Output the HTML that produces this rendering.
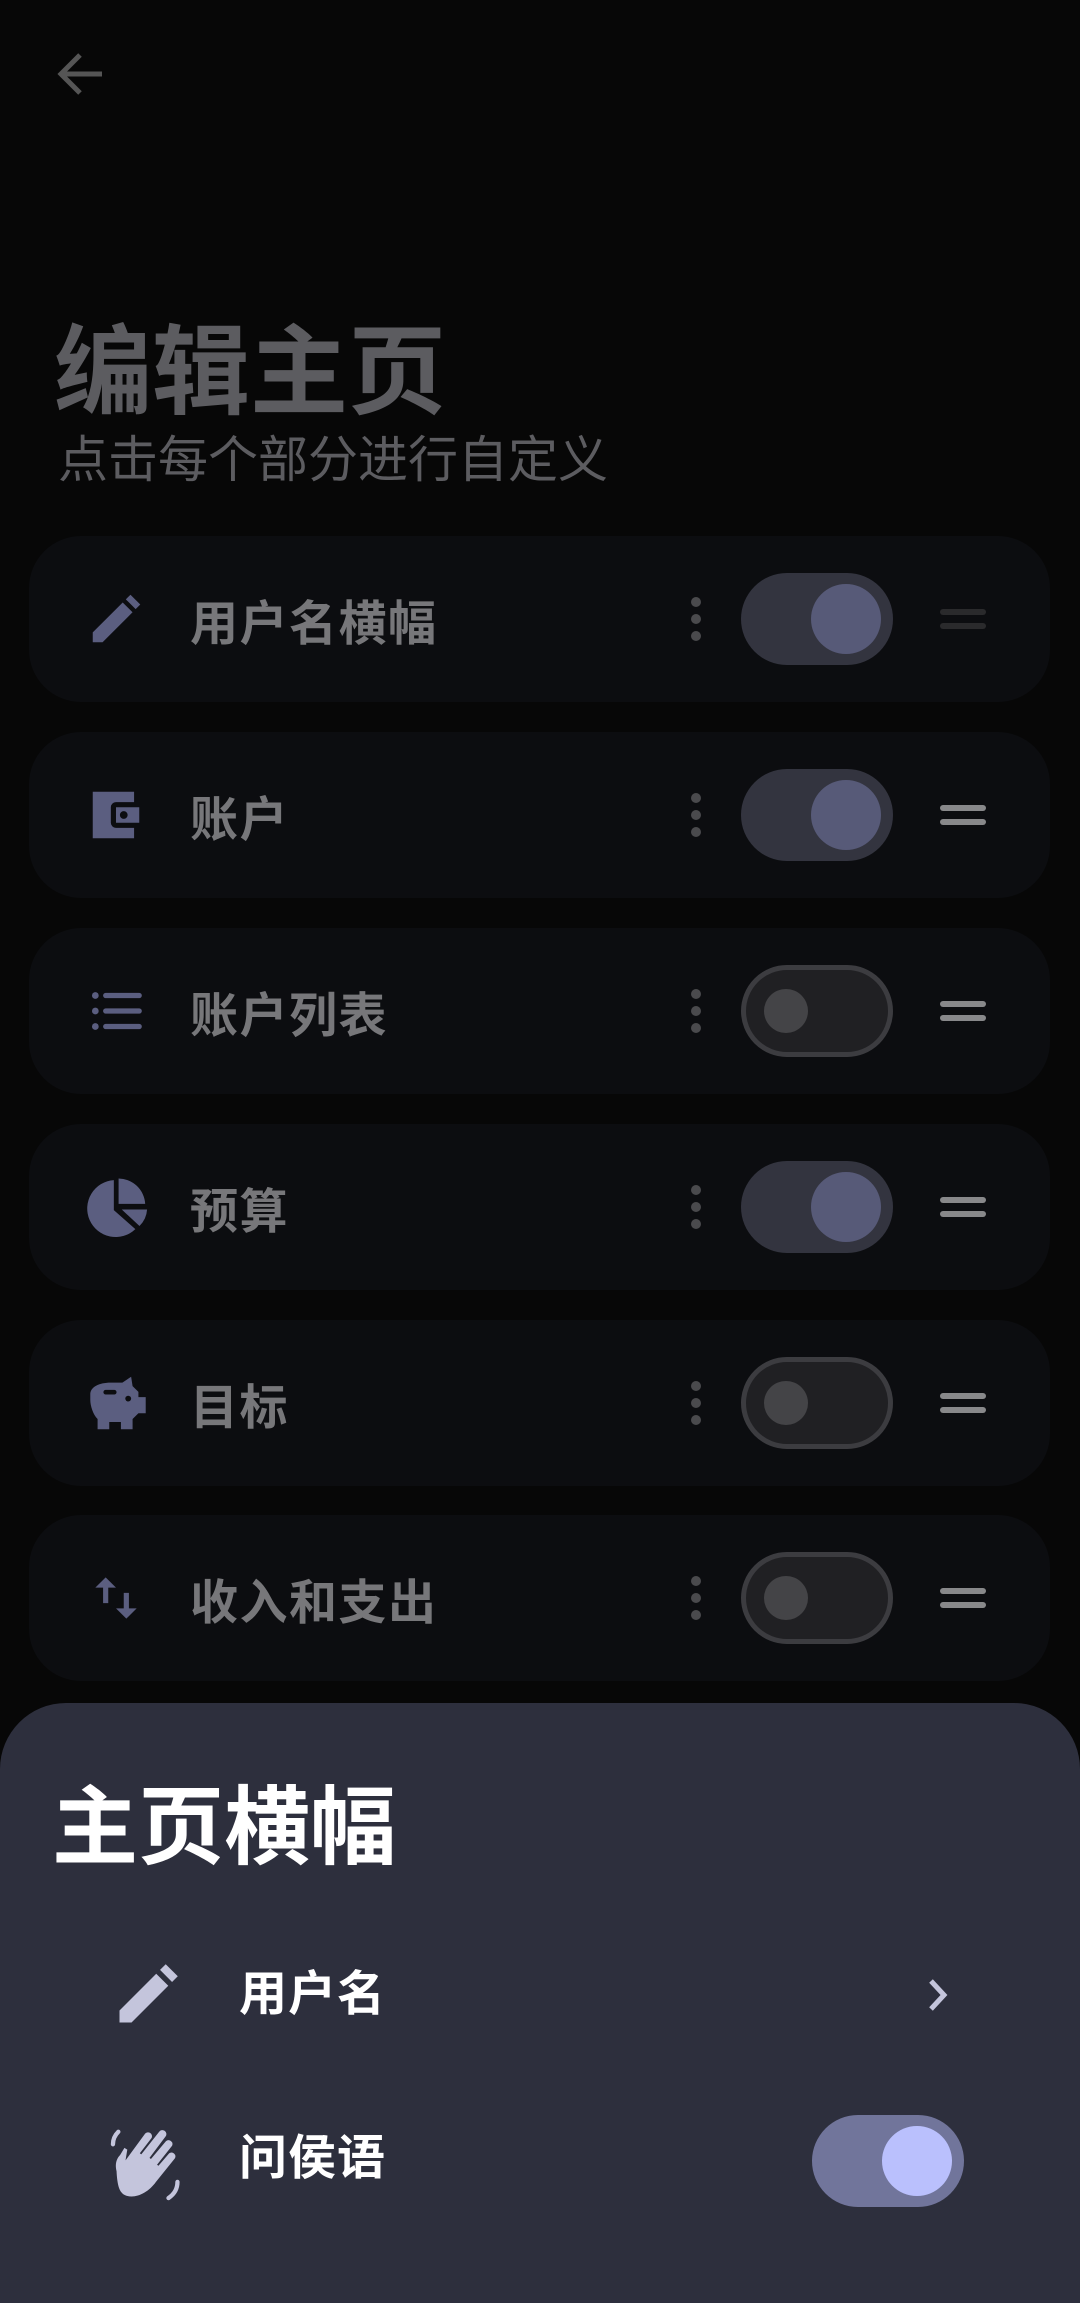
<!DOCTYPE html>
<html><head><meta charset="utf-8"><style>
*{margin:0;padding:0;box-sizing:border-box}
body{width:1080px;height:2303px;background:#070707;position:relative;overflow:hidden;font-family:"Liberation Sans","Noto Sans CJK SC",sans-serif}
.a{position:absolute}
.card{position:absolute;left:29px;width:1021px;height:166px;background:#0c0d10;border-radius:52px}
.lbl{position:absolute;left:161px;top:50%;transform:translateY(-50%);font-size:48px;font-weight:bold;color:#77777a;white-space:nowrap;letter-spacing:1.5px}
.ic{position:absolute;left:56px;top:50%;transform:translateY(-50%);width:62px;height:62px}
.dots{position:absolute;left:662px;top:50%;transform:translateY(-50%);width:10px;height:44px}
.dots i{display:block;width:10px;height:10px;border-radius:5px;background:#4a4a4d;margin-bottom:7px}
.tg{position:absolute;left:712px;top:50%;transform:translateY(-50%);width:152px;height:92px;border-radius:46px}
.on{background:#33343f}
.on::after{content:"";position:absolute;right:12px;top:11px;width:70px;height:70px;border-radius:50%;background:#575a78}
.off{background:#202023;border:5px solid #3c3c40}
.off::after{content:"";position:absolute;left:18px;top:19px;width:44px;height:44px;border-radius:50%;background:#444447}
.hd{position:absolute;left:911px;top:50%;transform:translateY(-50%);width:46px;height:20px}
.hd i{display:block;height:6px;border-radius:3px;background:#88888a;margin-bottom:8px}
</style></head><body>
<svg class="a" style="left:56px;top:51px" width="50" height="46" viewBox="0 0 50 46"><path d="M46 23H6M24 4L5 23l19 19" stroke="#555" stroke-width="5" fill="none"/></svg>
<div class="a" style="left:54px;top:312px;font-size:98px;font-weight:bold;color:#5c5c60;line-height:120px">编辑主页</div>
<div class="a" style="left:58px;top:430px;font-size:50px;color:#5c5c60;line-height:60px">点击每个部分进行自定义</div>

<div class="card" style="top:536px">
<svg class="ic" viewBox="0 0 24 24"><path d="M3 21v-3.8L14.6 5.6l3.8 3.8L6.8 21zM15.8 4.4l1.8-1.8 3.8 3.8-1.8 1.8z" fill="#5b5e80"/></svg>
<div class="lbl">用户名横幅</div><div class="dots"><i></i><i></i><i></i></div><div class="tg on"></div><div class="hd"><i style="background:#2a2a2c"></i><i style="background:#2a2a2c"></i></div></div>

<div class="card" style="top:732px">
<svg class="ic" viewBox="0 0 24 24"><path d="M3 3h16v4h-7a2 2 0 00-2 2v6a2 2 0 002 2h7v4H3zM12 9h9v6h-9zM15 10.5a1.5 1.5 0 100 3 1.5 1.5 0 000-3z" fill="#5b5e80" fill-rule="evenodd"/></svg>
<div class="lbl">账户</div><div class="dots"><i></i><i></i><i></i></div><div class="tg on"></div><div class="hd"><i></i><i></i></div></div>

<div class="card" style="top:928px">
<svg class="ic" viewBox="0 0 24 24"><circle cx="4" cy="6" r="1.3" fill="#5b5e80"/><circle cx="4" cy="12" r="1.3" fill="#5b5e80"/><circle cx="4" cy="18" r="1.3" fill="#5b5e80"/><path d="M8 6h13M8 12h13M8 18h13" stroke="#5b5e80" stroke-width="2" stroke-linecap="round"/></svg>
<div class="lbl">账户列表</div><div class="dots"><i></i><i></i><i></i></div><div class="tg off"></div><div class="hd"><i></i><i></i></div></div>

<div class="card" style="top:1124px">
<svg class="ic" style="left:50px;width:76px;height:76px" viewBox="0 0 24 24"><path d="M11 3.5v9.5l6.8 6A9 9 0 1111 3.5zM12.5 3a8.5 8.5 0 018.4 8h-8.4zM13.5 12.8h8a8 8 0 01-2.4 5.2z" fill="#5b5e80"/></svg>
<div class="lbl">预算</div><div class="dots"><i></i><i></i><i></i></div><div class="tg on"></div><div class="hd"><i></i><i></i></div></div>

<div class="card" style="top:1320px">
<svg class="ic" style="left:54px;width:70px;height:70px" viewBox="0 0 24 24"><path d="M2.5 9c0-2.5 3-4 7-4h4l3-2 .5 3.2 2 2V10h2.5v5.5H19l-2 2V21h-4v-2.5H9V21H5v-3.5C3.5 16 2.5 13 2.5 11z" fill="#5b5e80"/><rect x="7" y="7.5" width="4.5" height="1.6" rx=".8" fill="#0c0d10"/><circle cx="15.5" cy="10.5" r="1" fill="#0c0d10"/></svg>
<div class="lbl">目标</div><div class="dots"><i></i><i></i><i></i></div><div class="tg off"></div><div class="hd"><i></i><i></i></div></div>

<div class="card" style="top:1515px">
<svg class="ic" viewBox="0 0 24 24"><path d="M8 4l-4 4h3v6h2V8h3zM16 20l4-4h-3v-6h-2v6h-3z" fill="#5b5e80"/></svg>
<div class="lbl">收入和支出</div><div class="dots"><i></i><i></i><i></i></div><div class="tg off"></div><div class="hd"><i></i><i></i></div></div>

<div class="a" style="left:0;top:1703px;width:1080px;height:600px;background:#2d2f3d;border-radius:66px 66px 0 0">
<div class="a" style="left:52px;top:70px;font-size:86px;font-weight:bold;color:#fff;line-height:110px">主页横幅</div>
<svg class="a" style="left:110px;top:253px" width="76" height="76" viewBox="0 0 24 24"><path d="M3 21v-3.8L14.6 5.6l3.8 3.8L6.8 21zM15.8 4.4l1.8-1.8 3.8 3.8-1.8 1.8z" fill="#c4c5dc"/></svg>
<div class="a" style="left:239px;top:262px;font-size:48px;font-weight:bold;color:#fff;line-height:60px;letter-spacing:1px">用户名</div>
<svg class="a" style="left:925px;top:272px" width="26" height="40" viewBox="0 0 26 40"><path d="M6 6l13 14-13 14" stroke="#c4c5dc" stroke-width="5" fill="none"/></svg>
<svg class="a" style="left:104px;top:418px" width="86" height="86" viewBox="0 0 24 24"><path d="M3.5 14c-.5-2 0-3.5 1-4.5l1.2-2 .8.5-.5 3 5.5-7.5a1.1 1.1 0 011.8 1.2L10 9l.4.3 5-6.3a1.1 1.1 0 011.8 1.3l-4.5 6 .4.3 4.2-5a1.1 1.1 0 011.7 1.3l-4.2 5.3.4.3 3-3.5a1.1 1.1 0 011.6 1.4L14.5 17c-2.5 3.5-6.5 5-9 3.5-1.2-.8-1.8-2.5-2-6.5z" fill="#c4c5dc"/><path d="M2.5 6.5c0-1.5.5-2.5 1.5-3.5M20.5 17c0 2-1 3.5-2.5 4.5" stroke="#c4c5dc" stroke-width="1.2" fill="none" stroke-linecap="round"/></svg>
<div class="a" style="left:239px;top:426px;font-size:48px;font-weight:bold;color:#fff;line-height:60px;letter-spacing:1px">问侯语</div>
<div class="a" style="left:812px;top:412px;width:152px;height:92px;border-radius:46px;background:#71759b"><div class="a" style="right:12px;top:11px;width:70px;height:70px;border-radius:50%;background:#bac0fd"></div></div>
</div>
</body></html>
